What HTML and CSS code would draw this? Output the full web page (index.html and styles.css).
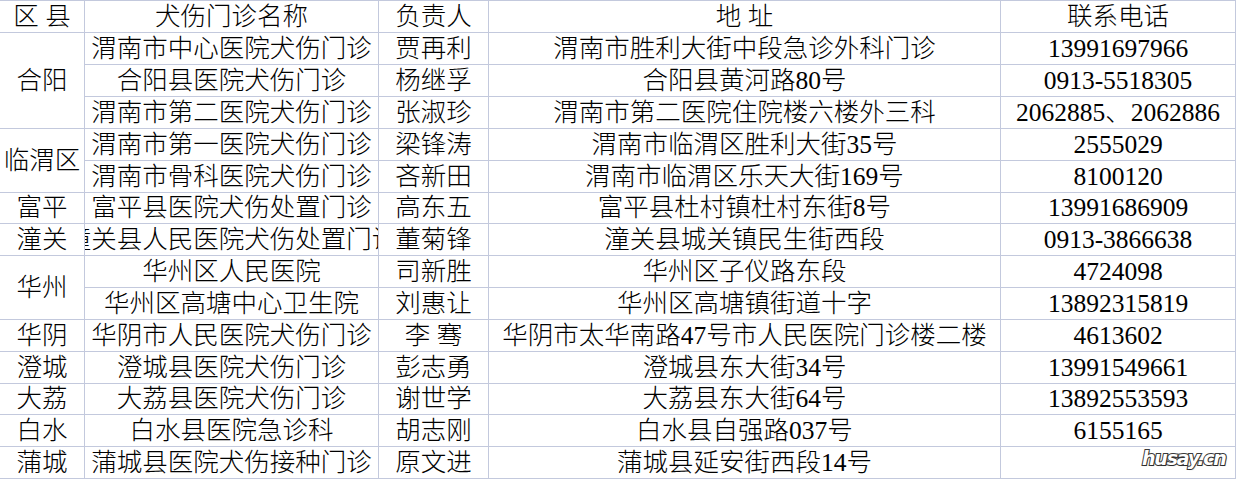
FILE: index.html
```html
<!DOCTYPE html>
<html lang="zh-CN">
<head>
<meta charset="utf-8">
<title>犬伤门诊</title>
<link rel="stylesheet" href="styles.css">
</head>
<body>
<div class="wrap">
<table class="clinics">
<colgroup>
<col class="c-area"><col class="c-name"><col class="c-person"><col class="c-addr"><col class="c-tel">
</colgroup>
<thead>
<tr><th><div class="cell">区&nbsp;县</div></th><th><div class="cell">犬伤门诊名称</div></th><th><div class="cell">负责人</div></th><th><div class="cell">地&nbsp;址</div></th><th><div class="cell">联系电话</div></th></tr>
</thead>
<tbody>
<tr><td rowspan="3"><div class="cell">合阳</div></td><td><div class="cell">渭南市中心医院犬伤门诊</div></td><td><div class="cell">贾再利</div></td><td><div class="cell">渭南市胜利大街中段急诊外科门诊</div></td><td><div class="cell">13991697966</div></td></tr>
<tr><td><div class="cell">合阳县医院犬伤门诊</div></td><td><div class="cell">杨继孚</div></td><td><div class="cell">合阳县黄河路80号</div></td><td><div class="cell">0913-5518305</div></td></tr>
<tr><td><div class="cell">渭南市第二医院犬伤门诊</div></td><td><div class="cell">张淑珍</div></td><td><div class="cell">渭南市第二医院住院楼六楼外三科</div></td><td><div class="cell">2062885、2062886</div></td></tr>
<tr><td rowspan="2"><div class="cell">临渭区</div></td><td><div class="cell">渭南市第一医院犬伤门诊</div></td><td><div class="cell">梁锋涛</div></td><td><div class="cell">渭南市临渭区胜利大街35号</div></td><td><div class="cell">2555029</div></td></tr>
<tr><td><div class="cell">渭南市骨科医院犬伤门诊</div></td><td><div class="cell">吝新田</div></td><td><div class="cell">渭南市临渭区乐天大街169号</div></td><td><div class="cell">8100120</div></td></tr>
<tr><td><div class="cell">富平</div></td><td><div class="cell">富平县医院犬伤处置门诊</div></td><td><div class="cell">高东五</div></td><td><div class="cell">富平县杜村镇杜村东街8号</div></td><td><div class="cell">13991686909</div></td></tr>
<tr><td><div class="cell">潼关</div></td><td><div class="cell">潼关县人民医院犬伤处置门诊</div></td><td><div class="cell">董菊锋</div></td><td><div class="cell">潼关县城关镇民生街西段</div></td><td><div class="cell">0913-3866638</div></td></tr>
<tr><td rowspan="2"><div class="cell">华州</div></td><td><div class="cell">华州区人民医院</div></td><td><div class="cell">司新胜</div></td><td><div class="cell">华州区子仪路东段</div></td><td><div class="cell">4724098</div></td></tr>
<tr><td><div class="cell">华州区高塘中心卫生院</div></td><td><div class="cell">刘惠让</div></td><td><div class="cell">华州区高塘镇街道十字</div></td><td><div class="cell">13892315819</div></td></tr>
<tr><td><div class="cell">华阴</div></td><td><div class="cell">华阴市人民医院犬伤门诊</div></td><td><div class="cell">李&nbsp;骞</div></td><td><div class="cell">华阴市太华南路47号市人民医院门诊楼二楼</div></td><td><div class="cell">4613602</div></td></tr>
<tr><td><div class="cell">澄城</div></td><td><div class="cell">澄城县医院犬伤门诊</div></td><td><div class="cell">彭志勇</div></td><td><div class="cell">澄城县东大街34号</div></td><td><div class="cell">13991549661</div></td></tr>
<tr><td><div class="cell">大荔</div></td><td><div class="cell">大荔县医院犬伤门诊</div></td><td><div class="cell">谢世学</div></td><td><div class="cell">大荔县东大街64号</div></td><td><div class="cell">13892553593</div></td></tr>
<tr><td><div class="cell">白水</div></td><td><div class="cell">白水县医院急诊科</div></td><td><div class="cell">胡志刚</div></td><td><div class="cell">白水县自强路037号</div></td><td><div class="cell">6155165</div></td></tr>
<tr><td><div class="cell">蒲城</div></td><td><div class="cell">蒲城县医院犬伤接种门诊</div></td><td><div class="cell">原文进</div></td><td><div class="cell">蒲城县延安街西段14号</div></td><td><div class="cell"></div></td></tr>
</tbody>
</table>
<div class="watermark">husay.cn</div>
</div>
</body>
</html>
```

FILE: styles.css
```css
html, body {
  margin: 0;
  padding: 0;
  background: #ffffff;
}

.wrap {
  position: relative;
  width: 1237px;
  height: 482px;
  overflow: hidden;
}

.clinics {
  border-collapse: separate;
  border-spacing: 0;
  table-layout: fixed;
  width: 1236px;
  border-top: 1px solid #c3c9dd;
  font-family: "Liberation Serif", "Noto Sans CJK SC", serif;
  font-size: 25.5px;
  font-weight: 300;
  color: #000000;
}

.c-area { width: 85px; }
.c-name { width: 294px; }
.c-person { width: 110px; }
.c-addr { width: 512px; }
.c-tel { width: 235px; }

.clinics th,
.clinics td {
  box-sizing: border-box;
  padding: 0;
  height: 32px;
  border-right: 1px solid #c3c9dd;
  border-bottom: 1px solid #c3c9dd;
  font-weight: 300;
  vertical-align: middle;
}

.clinics tbody tr:nth-child(6n) td {
  height: 31px;
}

.cell {
  display: flex;
  justify-content: center;
  align-items: center;
  white-space: nowrap;
  overflow: hidden;
  line-height: 30px;
  height: 30px;
}

.watermark {
  position: absolute;
  left: 1142px;
  top: 447px;
  font-family: "DejaVu Sans", sans-serif;
  font-weight: bold;
  font-style: italic;
  font-size: 19px;
  letter-spacing: -1.2px;
  color: #ffffff;
  -webkit-text-stroke: 2px #3a3a3a;
  paint-order: stroke fill;
  text-shadow: 1px 1px 1px rgba(0,0,0,0.3);
}
```
